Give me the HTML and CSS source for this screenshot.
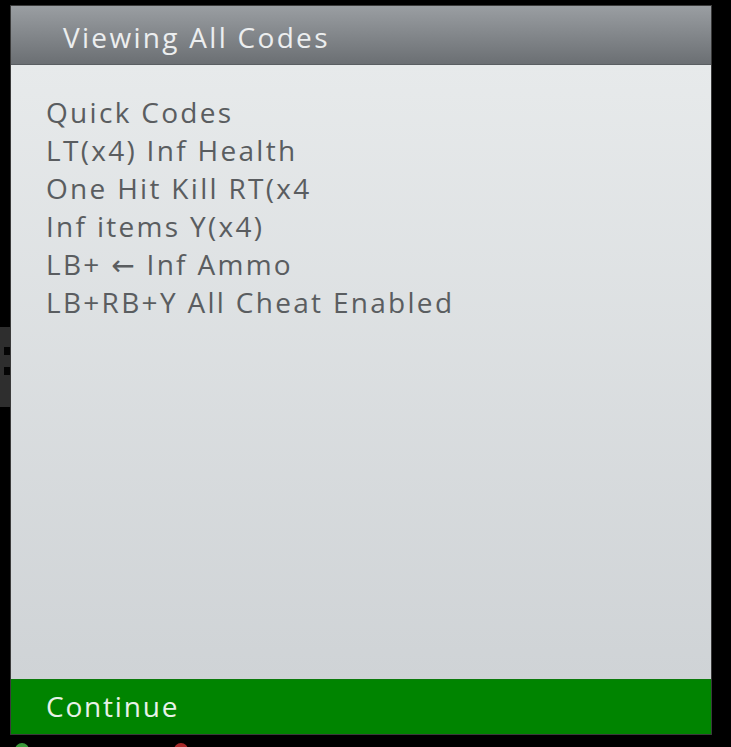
FILE: index.html
```html
<!DOCTYPE html>
<html>
<head>
<meta charset="utf-8">
<link rel="stylesheet" href="styles.css">
</head>
<body>
<div class="screen">
  <div class="side">
    <div class="band"><span class="sq"></span><span class="sq"></span></div>
  </div>
  <div class="dialog">
    <div class="header">Viewing All Codes</div>
    <div class="body">
      <div class="line">Quick Codes</div>
      <div class="line">LT(x4) Inf Health</div>
      <div class="line">One Hit Kill RT(x4</div>
      <div class="line">Inf items Y(x4)</div>
      <div class="line">LB+ ← Inf Ammo</div>
      <div class="line">LB+RB+Y All Cheat Enabled</div>
    </div>
    <div class="footer">Continue</div>
  </div>
  <div class="dots"><span class="dot green"></span><span class="dot red"></span></div>
</div>
</body>
</html>
```
FILE: styles.css
```css
html, body {
  margin: 0;
  padding: 0;
  background: #000;
  width: 731px;
  height: 747px;
  overflow: hidden;
}
.screen {
  position: relative;
  width: 731px;
  height: 747px;
  background: #000;
  font-family: "Open Sans", "DejaVu Sans", sans-serif;
}
.side {
  position: absolute;
  left: 0;
  top: 0;
  width: 11px;
  height: 747px;
}
.band {
  position: absolute;
  left: 0;
  top: 327px;
  width: 10px;
  height: 80px;
  background: #2e2e2e;
}
.sq {
  position: absolute;
  left: 4px;
  width: 6px;
  height: 8px;
  background: #050505;
}
.sq:first-child { top: 20px; }
.sq:last-child { top: 40px; }
.dialog {
  position: absolute;
  left: 11px;
  top: 6px;
  width: 700px;
  height: 728px;
  display: flex;
  flex-direction: column;
  box-shadow: 0 0 0 1px #3a3a3a;
}
.header {
  height: 59px;
  box-sizing: border-box;
  padding-left: 52px;
  padding-top: 12px;
  background: linear-gradient(#9a9ea2, #6b6f73);
  color: #eceeef;
  font-size: 28px;
  letter-spacing: 2.3px;
  line-height: 38px;
  border-bottom: 1px solid #5a5e62;
}
.body {
  flex: 1;
  background: linear-gradient(#e7eaeb, #cfd3d6);
  padding: 28px 0 0 35px;
  color: #5a5d60;
  font-size: 28px;
  letter-spacing: 2.3px;
  line-height: 38px;
}
.footer {
  height: 55px;
  box-sizing: border-box;
  background: #008400;
  color: #e8f2e8;
  font-size: 28px;
  letter-spacing: 1.8px;
  line-height: 52px;
  padding-left: 35px;
  border-top: 1px solid #0c7a0c;
}
.dots {
  position: absolute;
  left: 0;
  top: 742px;
  width: 731px;
  height: 5px;
}
.dot {
  position: absolute;
  top: 1px;
  width: 14px;
  height: 14px;
  border-radius: 50%;
}
.green { left: 15px; background: #3a9a3a; }
.red { left: 174px; background: #a82a2a; }
```
